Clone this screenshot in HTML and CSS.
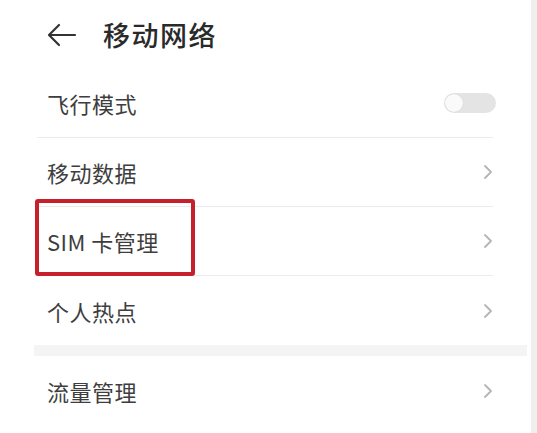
FILE: index.html
```html
<!DOCTYPE html>
<html lang="zh-CN">
<head>
<meta charset="utf-8">
<link rel="stylesheet" href="styles.css">
</head>
<body>
<div class="page">
  <div class="main">
    <header class="header">
      <svg class="back" width="30" height="24" viewBox="0 0 30 24">
        <path d="M28 12H3M12 2L2 12L12 22" fill="none" stroke="#333" stroke-width="2.2" stroke-linecap="round" stroke-linejoin="round"/>
      </svg>
      <h1 class="title">移动网络</h1>
    </header>
    <section class="group">
      <div class="row">
        <span class="label">飞行模式</span>
        <span class="toggle"><span class="knob"></span></span>
      </div>
      <div class="row">
        <span class="label">移动数据</span>
        <svg class="chev" width="10" height="16" viewBox="0 0 10 16"><path d="M2 2L8 8L2 14" fill="none" stroke="#b5b5b5" stroke-width="1.8" stroke-linecap="round" stroke-linejoin="round"/></svg>
      </div>
      <div class="row">
        <span class="label">SIM 卡管理</span>
        <svg class="chev" width="10" height="16" viewBox="0 0 10 16"><path d="M2 2L8 8L2 14" fill="none" stroke="#b5b5b5" stroke-width="1.8" stroke-linecap="round" stroke-linejoin="round"/></svg>
        <span class="highlight"></span>
      </div>
      <div class="row last">
        <span class="label">个人热点</span>
        <svg class="chev" width="10" height="16" viewBox="0 0 10 16"><path d="M2 2L8 8L2 14" fill="none" stroke="#b5b5b5" stroke-width="1.8" stroke-linecap="round" stroke-linejoin="round"/></svg>
      </div>
    </section>
    <div class="band"></div>
    <section class="group">
      <div class="row last">
        <span class="label">流量管理</span>
        <svg class="chev" width="10" height="16" viewBox="0 0 10 16"><path d="M2 2L8 8L2 14" fill="none" stroke="#b5b5b5" stroke-width="1.8" stroke-linecap="round" stroke-linejoin="round"/></svg>
      </div>
    </section>
  </div>
  <div class="edge"></div>
</div>
</body>
</html>
```
FILE: styles.css
```css
html, body {
  margin: 0;
  padding: 0;
  background: #ffffff;
}
body {
  font-family: "Noto Sans CJK SC", "Noto Sans", sans-serif;
  color: #3c3c3c;
}
.page {
  display: flex;
  width: 537px;
  height: 433px;
  overflow: hidden;
}
.main {
  width: 531px;
  display: flex;
  flex-direction: column;
}
.edge {
  width: 6px;
  background: #efefef;
}
.header {
  height: 69px;
  display: flex;
  align-items: center;
  padding-left: 47px;
  box-sizing: border-box;
}
.back {
  display: block;
  margin-right: 26px;
}
.title {
  margin: 0;
  font-size: 27px;
  font-weight: 500;
  color: #2a2a2a;
  letter-spacing: 1.5px;
  line-height: 1;
}
.group {
  padding-left: 37px;
  width: 456px;
}
.row {
  position: relative;
  height: 68px;
  display: flex;
  align-items: center;
  justify-content: space-between;
  padding-left: 10px;
  border-bottom: 1px solid #ececec;
  box-sizing: content-box;
}
.row.last {
  height: 69px;
  border-bottom: none;
}
.label {
  font-size: 22px;
  color: #3e3e3e;
  line-height: 1;
  letter-spacing: 0.5px;
}
.chev {
  display: block;
}
.toggle {
  position: relative;
  width: 52px;
  height: 20px;
  border-radius: 10px;
  background: #e4e4e4;
  margin-right: -3px;
}
.knob {
  position: absolute;
  left: 1px;
  top: 1px;
  width: 18px;
  height: 18px;
  border-radius: 50%;
  background: #fafafa;
  box-shadow: 0 0 1px rgba(0,0,0,0.15);
}
.band {
  height: 11px;
  margin-left: 34px;
  width: 493px;
  background: #f4f4f4;
}
.highlight {
  position: absolute;
  left: -2px;
  top: -8px;
  width: 152px;
  height: 69px;
  border: 4px solid #c6202c;
  border-radius: 3px;
}
```
